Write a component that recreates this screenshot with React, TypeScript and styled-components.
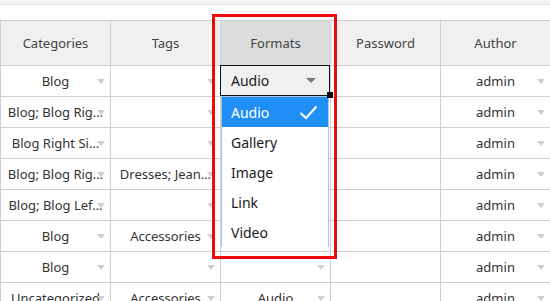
import React from "react";
import styled, { createGlobalStyle } from "styled-components";

const GlobalStyle = createGlobalStyle`
  html, body { margin: 0; padding: 0; background: #fff; }
  body { font-family: "Noto Sans", "Open Sans", Arial, sans-serif; overflow: hidden; }
  * { box-sizing: border-box; }
`;

const Page = styled.div`
  position: relative;
  width: 550px;
  height: 301px;
  overflow: hidden;
  background: #fff;
`;

const TopBar = styled.div`
  height: 5px;
  background: #f4f4f4;
  border-bottom: 1px solid #e2e2e2;
`;

const Table = styled.div`
  margin-top: 15px;
  display: grid;
  grid-template-columns: repeat(5, 110px);
  border-top: 1px solid #cfcfcf;
  border-left: 1px solid #cfcfcf;
  width: 551px;
`;

const HeaderCell = styled.div<{ $active?: boolean }>`
  height: 45px;
  display: flex;
  align-items: center;
  justify-content: center;
  background: ${(p) => (p.$active ? "#dcdcdc" : "#f0f0f0")};
  border-right: 1px solid #cfcfcf;
  border-bottom: 1px solid #cfcfcf;
  color: #444;
  font-size: 13px;
`;

const Cell = styled.div`
  position: relative;
  height: 31px;
  display: grid;
  grid-template: 30px / 1fr;
  border-right: 1px solid #cfcfcf;
  border-bottom: 1px solid #cfcfcf;
  background: #fff;
`;

const CellText = styled.div`
  grid-area: 1 / 1;
  line-height: 30px;
  padding: 0 5px;
  text-align: center;
  white-space: nowrap;
  color: #333;
  font-size: 13px;
`;

const Arrow = styled.span`
  grid-area: 1 / 1;
  justify-self: end;
  align-self: center;
  margin: 1px 5px 0 0;
  width: 0;
  height: 0;
  border-left: 4.5px solid transparent;
  border-right: 4.5px solid transparent;
  border-top: 5px solid #cfcfcf;
`;

const Editor = styled.div`
  position: absolute;
  left: -1px;
  top: -1px;
  width: 110px;
  height: 31px;
  border: 1px solid #111;
  background: #f0f0f0;
  display: flex;
  align-items: center;
  justify-content: space-between;
  padding: 0 13px 0 10px;
  font-size: 14px;
  color: #1a1a1a;
  z-index: 3;
`;

const EditorArrow = styled.span`
  width: 0;
  height: 0;
  border-left: 5px solid transparent;
  border-right: 5px solid transparent;
  border-top: 5px solid #7a7a7a;
`;

const FillHandle = styled.span`
  position: absolute;
  left: 106px;
  top: 26px;
  width: 6px;
  height: 6px;
  background: #000;
  z-index: 5;
`;

const List = styled.div`
  position: absolute;
  left: 0;
  top: 30px;
  width: 108px;
  height: 151px;
  border: 1px solid #a8c4e8;
  background: #fff;
  z-index: 4;
  display: flex;
  flex-direction: column;
`;

const Option = styled.div<{ $selected?: boolean }>`
  height: 30px;
  flex: none;
  display: flex;
  align-items: center;
  justify-content: space-between;
  padding: 0 10px 0 9px;
  font-size: 14px;
  color: ${(p) => (p.$selected ? "#fff" : "#1a1a1a")};
  background: ${(p) => (p.$selected ? "#1f8ff5" : "#fff")};
`;

const Highlight = styled.div`
  position: absolute;
  left: 212px;
  top: 14px;
  width: 125px;
  height: 245px;
  border: 3px solid #ee0a0a;
  z-index: 10;
  pointer-events: none;
`;

type Row = {
  cat: string;
  tags: string;
  format: string;
  author: string;
};

const rows: Row[] = [
  { cat: "Blog", tags: "", format: "Audio", author: "admin" },
  { cat: "Blog; Blog Rig…", tags: "", format: "", author: "admin" },
  { cat: "Blog Right Si…", tags: "", format: "", author: "admin" },
  { cat: "Blog; Blog Rig…", tags: "Dresses; Jean…", format: "", author: "admin" },
  { cat: "Blog; Blog Lef…", tags: "", format: "", author: "admin" },
  { cat: "Blog", tags: "Accessories", format: "", author: "admin" },
  { cat: "Blog", tags: "", format: "", author: "admin" },
  { cat: "Uncategorized", tags: "Accessories", format: "Audio", author: "admin" },
];

const headers = ["Categories", "Tags", "Formats", "Password", "Author"];
const options = ["Audio", "Gallery", "Image", "Link", "Video"];

const Check = () => (
  <svg width="19" height="15" viewBox="0 0 19 15">
    <polyline points="1.5,8 7,13 17.5,1.5" fill="none" stroke="#fff" strokeWidth="2" />
  </svg>
);

export default function App() {
  return (
    <Page>
      <GlobalStyle />
      <TopBar />
      <Table>
        {headers.map((h) => (
          <HeaderCell key={h} $active={h === "Formats"}>
            {h}
          </HeaderCell>
        ))}
        {rows.map((r, i) => (
          <React.Fragment key={i}>
            <Cell>
              <CellText>{r.cat}</CellText>
              <Arrow />
            </Cell>
            <Cell>
              <CellText>{r.tags}</CellText>
              <Arrow />
            </Cell>
            <Cell>
              {i === 0 ? (
                <>
                  <Editor>
                    Audio
                    <EditorArrow />
                  </Editor>
                  <FillHandle />
                  <List>
                    {options.map((o, k) => (
                      <Option key={o} $selected={k === 0}>
                        {o}
                        {k === 0 && <Check />}
                      </Option>
                    ))}
                  </List>
                </>
              ) : (
                <>
                  <CellText>{r.format}</CellText>
                  <Arrow />
                </>
              )}
            </Cell>
            <Cell>
              <CellText />
            </Cell>
            <Cell>
              <CellText>{r.author}</CellText>
              <Arrow />
            </Cell>
          </React.Fragment>
        ))}
      </Table>
      <Highlight />
    </Page>
  );
}
